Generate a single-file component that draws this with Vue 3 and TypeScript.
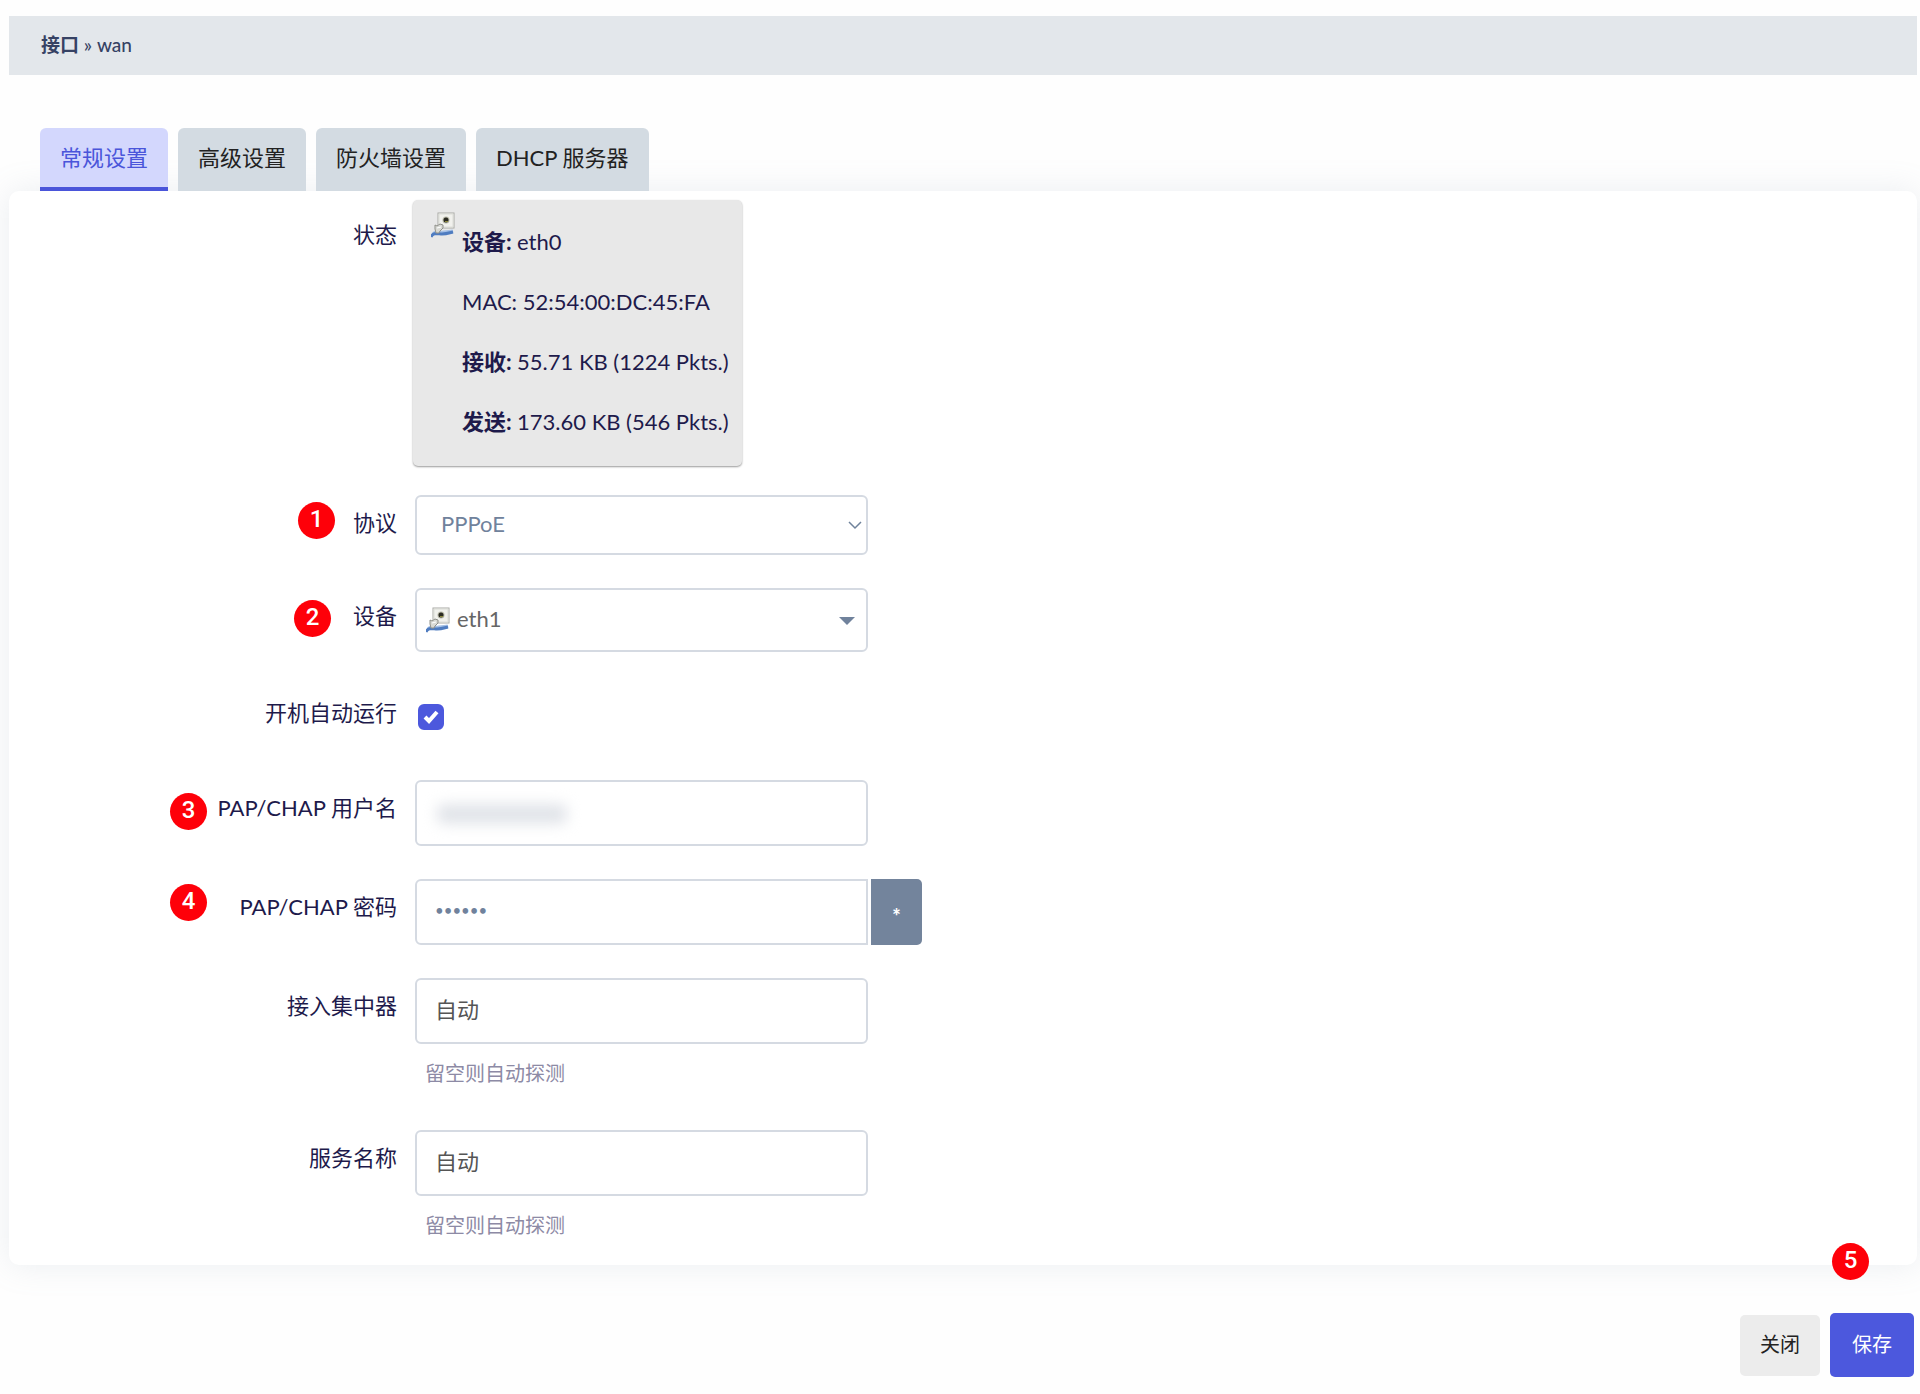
<script setup lang="ts">
import { ref } from 'vue'

interface Stat {
  label: string
  value: string
  strong: boolean
}

const tabs: string[] = ['常规设置', '高级设置', '防火墙设置', 'DHCP 服务器']
const activeTab = ref<number>(0)

const stats: Stat[] = [
  { label: '设备', value: 'eth0', strong: true },
  { label: 'MAC', value: '52:54:00:DC:45:FA', strong: false },
  { label: '接收', value: '55.71 KB (1224 Pkts.)', strong: true },
  { label: '发送', value: '173.60 KB (546 Pkts.)', strong: true },
]

const proto = ref('PPPoE')
const device = ref('eth1')
const autoStart = ref(true)
const username = ref('')
const password = ref('secret')
const revealed = ref(false)
const concentrator = ref('')
const service = ref('')
</script>

<template>
  <svg class="defs" aria-hidden="true">
    <symbol id="port" viewBox="0 0 24 26">
      <rect x="7" y="1" width="16" height="15" fill="#f1f1ed" stroke="#a7a8a4" />
      <rect x="8" y="2" width="14" height="13" fill="none" stroke="#dcddd8" />
      <circle cx="15" cy="8" r="3.5" fill="#b9b9a8" />
      <circle cx="15" cy="8" r="2.5" fill="#2a2a22" />
      <path d="M14 9h3v1h-3z" fill="#8d8b3c" />
      <path d="M2 22C4 18 10 21 13 20c4-1 6 0 9-1" fill="none" stroke="#a5c0e6" stroke-width="3" />
      <path d="M0 25c2-5 7-3 11-3s7-1 11-2" fill="none" stroke="#4f7cc0" stroke-width="3" />
      <path d="M4 13l2 1 3-2 3 1 0 3-3 3-1 2-3 0-1-4z" fill="#d9dad5" stroke="#8f908a" />
      <path d="M6 16l4-1" stroke="#fff" />
    </symbol>
  </svg>

  <main class="page">
    <h2 class="crumb"><b>接口</b> » wan</h2>

    <nav class="tabs">
      <button
        v-for="(tab, i) in tabs"
        :key="tab"
        type="button"
        class="tab"
        :class="{ active: i === activeTab }"
        @click="activeTab = i"
      >{{ tab }}</button>
    </nav>

    <form id="iface" class="panel" @submit.prevent>
      <div class="row status-row">
        <span class="label">状态</span>
        <div class="status">
          <svg class="port"><use href="#port" /></svg>
          <div class="stats">
            <p v-for="s in stats" :key="s.label">
              <b v-if="s.strong">{{ s.label }}: </b><template v-else>{{ s.label }}: </template>{{ s.value }}
            </p>
          </div>
        </div>
      </div>

      <div class="row">
        <span class="badge b1">1</span>
        <label class="label" for="proto">协议</label>
        <div class="field">
          <select id="proto" v-model="proto" class="control short">
            <option>PPPoE</option>
          </select>
          <svg class="chevron" viewBox="0 0 14 9"><path d="M1 1l6 6 6-6" fill="none" stroke="#6f829b" stroke-width="1.5" /></svg>
        </div>
      </div>

      <div class="row">
        <span class="badge b2">2</span>
        <label class="label" for="device">设备</label>
        <div class="field">
          <select id="device" v-model="device" class="control device">
            <option>eth1</option>
          </select>
          <svg class="port over"><use href="#port" /></svg>
          <svg class="caret" viewBox="0 0 16 8"><path d="M0 0h16L8 8z" fill="#70829c" /></svg>
        </div>
      </div>

      <div class="row check-row">
        <label class="label" for="auto">开机自动运行</label>
        <div class="field tick">
          <input id="auto" v-model="autoStart" type="checkbox" class="checkbox" />
          <svg v-if="autoStart" class="mark" viewBox="0 0 26 26"><path d="M7 13l4 4 8-9" fill="none" stroke="#fff" stroke-width="4" /></svg>
        </div>
      </div>

      <div class="row">
        <span class="badge b3">3</span>
        <label class="label" for="user">PAP/CHAP 用户名</label>
        <div class="field">
          <input id="user" v-model="username" type="text" class="control" />
          <span class="smudge"></span>
        </div>
      </div>

      <div class="row">
        <span class="badge b4">4</span>
        <label class="label" for="pass">PAP/CHAP 密码</label>
        <div class="field">
          <input id="pass" v-model="password" :type="revealed ? 'text' : 'password'" class="control joined" />
        </div>
        <button type="button" class="reveal" @click="revealed = !revealed">*</button>
      </div>

      <div class="row">
        <label class="label" for="ac">接入集中器</label>
        <div class="field">
          <input id="ac" v-model="concentrator" type="text" class="control" placeholder="自动" />
          <p class="help">留空则自动探测</p>
        </div>
      </div>

      <div class="row">
        <label class="label" for="service">服务名称</label>
        <div class="field">
          <input id="service" v-model="service" type="text" class="control" placeholder="自动" />
          <p class="help">留空则自动探测</p>
        </div>
      </div>
    </form>

    <footer class="actions">
      <span class="badge b5">5</span>
      <button type="button" class="close">关闭</button>
      <button type="submit" form="iface" class="save">保存</button>
    </footer>
  </main>
</template>

<style>
body {
  background: #fefefe;
}
</style>

<style scoped>
* {
  box-sizing: border-box;
}
.defs {
  position: absolute;
  width: 0;
  height: 0;
}
.page {
  padding: 16px 3px 16px 9px;
  font: 22px/30px Lato, 'Noto Sans CJK SC', sans-serif;
  color: #1e1a4b;
}
button,
input,
select {
  font: inherit;
}
.crumb {
  margin: 0;
  padding: 14px 32px 15px;
  background: #e3e7eb;
  color: #364264;
  font-size: 19px;
  line-height: 30px;
  font-weight: 500;
}
.tabs {
  display: flex;
  gap: 10px;
  margin-top: 53px;
  padding-left: 31px;
}
.tab {
  height: 63px;
  padding: 0 20px 4px;
  border: 0;
  border-radius: 6px 6px 0 0;
  background: #d3dbe2;
  color: #222;
}
.tab.active {
  padding-bottom: 0;
  border-bottom: 4px solid #4a55da;
  background: #d3d7fd;
  color: #4a55da;
}
.panel {
  display: flex;
  flex-direction: column;
  gap: 33px;
  padding: 9px 0 16px;
  border-radius: 10px;
  background: #fff;
  box-shadow: 0 0 32px rgba(136, 152, 170, 0.17);
}
.row {
  position: relative;
  display: flex;
  align-items: flex-start;
}
.status-row {
  margin-bottom: -5px;
}
.label {
  width: 388px;
  margin-right: 18px;
  padding-top: 13px;
  flex: none;
  text-align: right;
}
.status-row .label {
  margin-right: 16px;
  padding-top: 20px;
}
.status {
  display: flex;
  gap: 7px;
  height: 266px;
  margin-bottom: 1px;
  padding: 12px 13px 0 18px;
  border-radius: 5px;
  background: #e8e8e8;
  box-shadow: 0 1px 2px rgba(0, 0, 0, 0.4);
}
.port {
  width: 24px;
  height: 26px;
}
.stats {
  padding-top: 15px;
}
.stats p {
  margin: 0 0 30px;
  line-height: 30px;
}
.field {
  position: relative;
  width: 453px;
}
.control {
  display: block;
  width: 100%;
  height: 66px;
  padding: 0 18px 4px;
  border: 2px solid #d5dae2;
  border-radius: 6px;
  background: #fff;
  color: #70829c;
  appearance: none;
  outline: 0;
}
.control::placeholder {
  color: #555;
  opacity: 1;
}
.control.short {
  height: 60px;
  padding: 0 24px 2px;
}
.control.device {
  height: 64px;
  padding: 0 40px 2px;
  color: #666;
}
.control.joined {
  border-radius: 6px 0 0 6px;
}
.control[type='password'] {
  font-size: 15px;
}
.chevron {
  position: absolute;
  right: 6px;
  top: 26px;
  width: 14px;
  height: 9px;
}
.caret {
  position: absolute;
  right: 13px;
  top: 29px;
  width: 16px;
  height: 8px;
}
.port.over {
  position: absolute;
  left: 11px;
  top: 19px;
}
.check-row {
  height: 62px;
}
.tick {
  padding: 19px 0 0 3px;
}
.checkbox {
  display: block;
  width: 26px;
  height: 26px;
  margin: 0;
  border-radius: 6px;
  background: #fff;
  border: 2px solid #4c58dd;
  appearance: none;
}
.checkbox:checked {
  background: #4c58dd;
}
.mark {
  position: absolute;
  left: 3px;
  top: 19px;
  width: 26px;
  height: 26px;
  pointer-events: none;
}
.smudge {
  position: absolute;
  left: 22px;
  top: 24px;
  width: 130px;
  height: 20px;
  border-radius: 6px;
  background: #e1e4e9;
  filter: blur(7px);
  pointer-events: none;
}
.reveal {
  width: 51px;
  height: 66px;
  margin-left: 3px;
  padding: 8px 0 0;
  border: 0;
  border-radius: 0 5px 5px 0;
  background: #73849c;
  color: #fff;
  font-size: 20px;
  font-weight: 900;
}
.help {
  margin: 14px 0 9px 10px;
  color: #8d8aa5;
  font-size: 20px;
  line-height: 30px;
}
.badge {
  position: absolute;
  width: 37px;
  height: 37px;
  border-radius: 50%;
  background: #fe0009;
  color: #fff;
  font-family: Roboto, sans-serif;
  font-weight: 500;
  font-size: 24px;
  line-height: 35px;
  text-align: center;
}
.b1 {
  left: 289px;
  top: 7px;
}
.b2 {
  left: 285px;
  top: 12px;
}
.b3 {
  left: 161px;
  top: 13px;
}
.b4 {
  left: 161px;
  top: 5px;
}
.b5 {
  right: 48px;
  top: -70px;
}
.actions {
  position: relative;
  display: flex;
  justify-content: flex-end;
  align-items: center;
  gap: 10px;
  margin-top: 48px;
  padding-right: 3px;
  font-size: 20px;
}
.close,
.save {
  height: 61px;
  padding: 0 20px 2px;
  border: 0;
  border-radius: 5px;
  background: #ececec;
  color: #222;
}
.save {
  height: 64px;
  padding: 0 22px 2px;
  background: #4c58dd;
  color: #fff;
}
</style>
